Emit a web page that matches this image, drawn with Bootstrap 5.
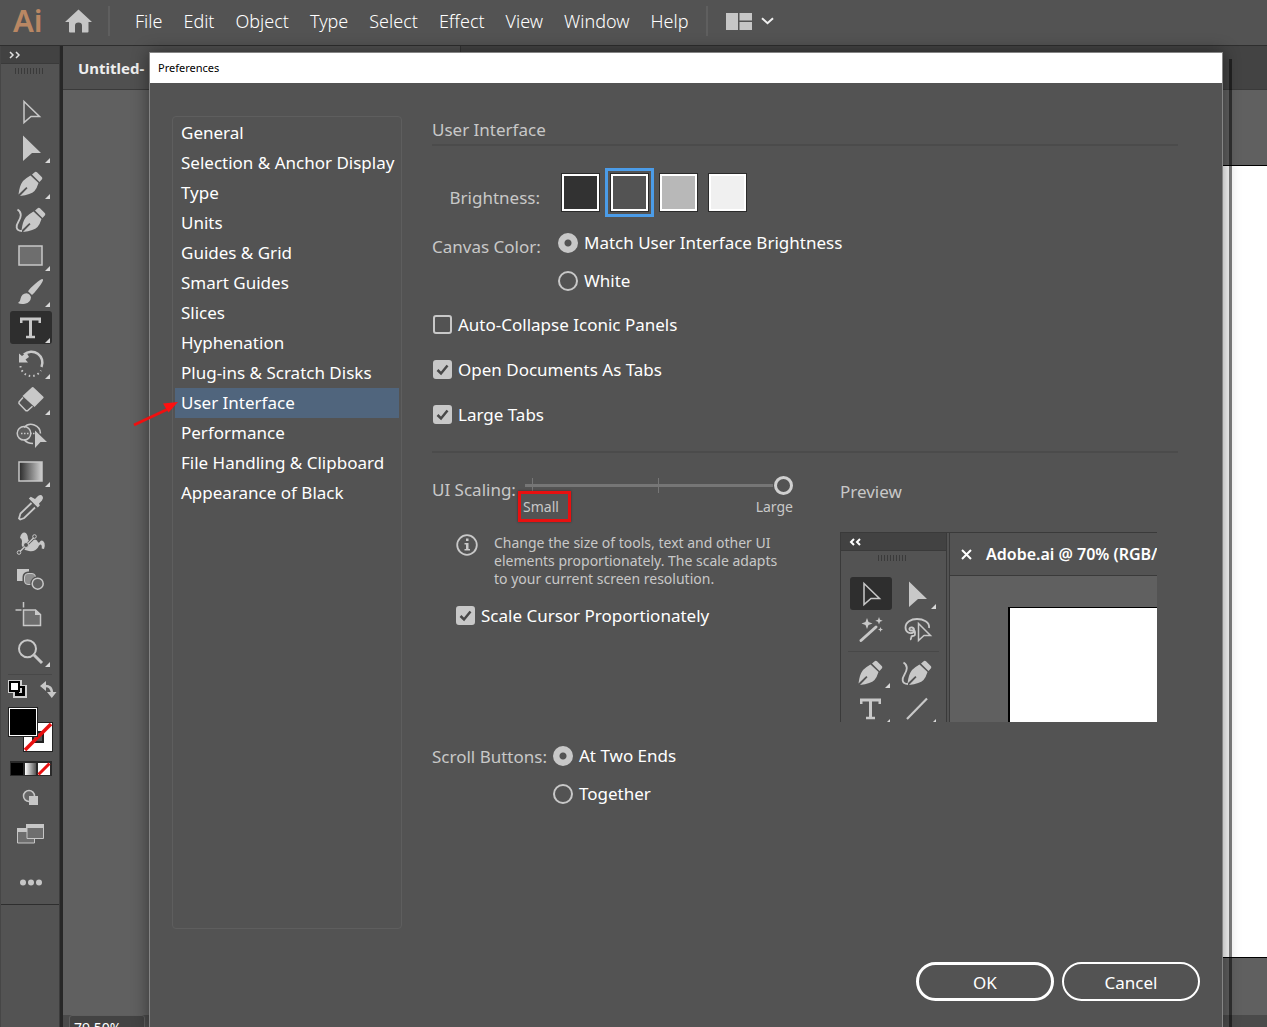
<!DOCTYPE html>
<html lang="en">
<head>
<meta charset="utf-8">
<meta name="viewport" content="width=device-width, initial-scale=1">
<title>Preferences</title>
<link href="https://cdn.jsdelivr.net/npm/bootstrap@5.3.0/dist/css/bootstrap.min.css" rel="stylesheet">
<style>
  :root { --ui: #535353; --ink: #c8c8c8; --edge: #3c3c3c; --canvas: #606060; }
  body { font-family: "Noto Sans", "Open Sans", sans-serif; font-size: 17px; line-height: 24px; color: #fff; background: var(--ui); height: 100vh; overflow: hidden; }
  svg { display: block; }
  button { color: inherit; }

  /* top menu bar */
  .app-bar { height: 46px; border-bottom: 1px solid #2e2e2e; padding-left: 13px; padding-bottom: 3px; }
  .app-logo { font-size: 31px; font-weight: 600; line-height: 38px; color: #b98763; width: 52px; padding-bottom: 2px; }
  .app-home { padding-top: 3px; }
  .app-sep { width: 2px; height: 30px; background: #5f5f5f; }
  .app-menu { gap: 21px; margin-left: 25px; margin-right: 18px; }
  .app-menu a { font-size: 18px; font-weight: 300; color: #fff; text-decoration: none; }
  .bare { background: none; border: 0; padding: 0; }

  /* tool strip */
  .tool-strip { width: 63px; border-left: 1px solid #464646; border-right: 3px solid #272727; }
  .tool-inner { border-right: 1px solid var(--edge); }
  .strip-head { height: 18px; background: #424242; border-bottom: 1px solid #3a3a3a; padding-left: 8px; }
  .grip { width: 29px; height: 6px; background: repeating-linear-gradient(90deg, #3a3a3a 0 1px, transparent 1px 3px); margin: 4px 0 16px 14px; }
  .tool { width: 44px; height: 36px; color: var(--ink); }
  .tool svg { overflow: visible; }
  .strip-rule { height: 1px; background: #484848; margin: 0 7px; }
  .strip-end { border-top: 1px solid #2e2e2e; }

  /* document */
  .doc-tabs { height: 44px; background: #434343; border-bottom: 1px solid #3a3a3a; }
  .doc-tab { width: 398px; background: #505050; border-right: 1px solid #333; padding-left: 15px; font-size: 15px; font-weight: 700; color: #eee; }
  .doc-canvas { background: var(--canvas); padding: 75px 0 57px 700px; }
  .artboard { background: #fff; border: solid #000; border-width: 1px 0; }
  .doc-status { height: 12px; background: #4a4a4a; padding-left: 6px; overflow: hidden; }
  .zoom-box { width: 76px; height: 30px; border: 1px solid #5e5e5e; border-radius: 3px; background: #434343; font-size: 14px; line-height: 24px; padding-left: 4px; }

  /* dialog window */
  .pref { position: absolute; left: 149px; right: 44px; top: 52px; bottom: 0; background: var(--ui); border: 1px solid #858585; border-bottom: 0; box-shadow: 0 0 16px rgba(0,0,0,.45); }
  .pref::after { content: ""; position: absolute; left: 100%; top: 6px; bottom: 0; width: 10px; border-right: 3px solid rgba(0,0,0,.5); }
  .pref-title { height: 30px; background: #fff; color: #000; font-size: 11px; line-height: 30px; padding-left: 8px; }
  .pref-body { padding: 33px 44px 0 22px; gap: 30px; }
  .pref-nav { width: 230px; border: 1px solid #5e5e5e; border-radius: 4px; padding: 1px 2px; }
  .pref-nav a { height: 30px; line-height: 30px; padding-left: 6px; color: #fff; text-decoration: none; white-space: nowrap; }
  .pref-nav a.current { background: #50657d; }
  .dim { color: var(--ink); }
  .pane-title { height: 30px; line-height: 28px; border-bottom: 2px solid #4b4b4b; font-size: 17px; font-weight: 400; margin: 0; }
  .pane-rule { height: 2px; background: #4b4b4b; margin-top: 14px; }
  .tag-a { width: 108px; line-height: 38px; text-align: right; margin-right: 18px; white-space: nowrap; direction: rtl; unicode-bidi: plaintext; }
  .tag-b { width: 121px; line-height: 40px; }
  .tag-c { width: 91px; line-height: 40px; white-space: nowrap; }

  .bright { margin-top: 22px; height: 49px; gap: 10px; padding-left: 3px; }
  .swatch { appearance: none; width: 39px; height: 39px; margin: 0; border: 1px solid #2b2b2b; box-shadow: inset 0 0 0 2px #fff; }
  .swatch:checked { outline: 3px solid #4b9ce8; outline-offset: 2px; }
  .sw-1 { background: #323232; } .sw-2 { background: #535353; } .sw-3 { background: #b8b8b8; } .sw-4 { background: #f0f0f0; }
  .canvas-row { padding-top: 7px; }
  .check-rows { padding-top: 2px; }

  .opt { gap: 6px; }
  .row-38 { height: 38px; }
  .row-45 { height: 45px; }
  .dot.form-check-input { width: 20px; height: 20px; margin: 0; background: none; border: 2px solid var(--ink); flex: none; }
  .dot.form-check-input:checked { background: radial-gradient(circle, var(--ui) 0 3px, var(--ink) 4px); background-origin: border-box; }
  .tick.form-check-input { width: 19px; height: 19px; margin: 0 0 0 1px; background: none; border: 2px solid var(--ink); border-radius: 3px; flex: none; }
  .tick.form-check-input:checked { background: var(--ink) url("data:image/svg+xml,%3Csvg xmlns='http://www.w3.org/2000/svg' viewBox='0 0 15 15'%3E%3Cpath d='M2.5 8l3.5 3.5L12.500 3.500' fill='none' stroke='%23484848' stroke-width='2.500'/%3E%3C/svg%3E") center / 15px no-repeat; }

  .scale-row { padding-top: 13px; }
  .scale-left { width: 408px; }
  .scale-box { width: 270px; padding-top: 5px; }
  .scale-ends { padding-top: 3px; }
  .scale-note { padding: 18px 0 5px 24px; }
  .scale-range { appearance: none; display: block; width: 268px; height: 20px; margin: 0 0 0 auto;
    background: linear-gradient(#767676,#767676) 7px 3px / 1px 15px no-repeat, linear-gradient(#767676,#767676) 133px 3px / 1px 15px no-repeat, linear-gradient(#767676,#767676) 0 9px / 248px 3px no-repeat; }
  .scale-range::-webkit-slider-thumb { appearance: none; width: 19px; height: 19px; border: 3px solid #d0d0d0; border-radius: 50%; background: var(--ui); }
  .fine { font-size: 14px; line-height: 18px; }
  .callout-box { position: absolute; inset: -7px -12px -6px -5px; border: 3px solid #e81010; box-shadow: 0 0 2px rgba(60,0,0,.6); }

  /* scaling preview */
  .mock-title { padding-top: 14px; }
  .mock { height: 190px; width: 317px; margin-top: 28px; overflow: hidden; border-left: 1px solid #3a3a3a; border-top: 1px solid #3a3a3a; }
  .mock-tools { width: 106px; border-right: 1px solid #3a3a3a; flex: none; }
  .mock-tools .grip { margin: 4px auto 15px 37px; }
  .mock-tools .strip-rule { margin: 3px 7px; }
  .mock-grid { padding-left: 8px; column-gap: 2px; }
  .mock-doc { margin-left: 2px; border-left: 1px solid #3a3a3a; background: var(--canvas); min-width: 0; }
  .mock-tab { height: 43px; background: var(--ui); border-bottom: 1px solid #3a3a3a; padding-left: 11px; gap: 14px; font-size: 16px; font-weight: 600; white-space: nowrap; }
  .mock-page { margin: 31px 0 0 58px; background: #fff; border: solid #000; border-width: 1px 0 0 2px; }

  .scroll-row { padding-top: 15px; }
  .pref-foot { padding: 33px 22px 26px; gap: 8px; }
  .pill { width: 138px; height: 39px; border-radius: 20px; border: 2px solid #fff; color: #fff; font-size: 17px; line-height: 24px; padding: 2px 0 0; }
  .pill-main { border-width: 3px; }
  .pill:hover { color: #fff; background: #606060; border-color: #fff; }
  .pointer { position: absolute; left: 130px; top: 396px; }
</style>
</head>
<body class="d-flex flex-column">

<svg width="0" height="0" class="position-absolute" aria-hidden="true">
  <defs>
    <linearGradient id="gr"><stop offset="0" stop-color="#2a2a2a"/><stop offset="1" stop-color="#d0d0d0"/></linearGradient>
    <linearGradient id="gw"><stop offset="0" stop-color="#fff"/><stop offset="1" stop-color="#555"/></linearGradient>
    <symbol id="plate" viewBox="0 0 44 36"><rect x="1" y="1" width="42" height="33" rx="3" fill="#2e2e2e"/></symbol>
    <symbol id="corner" viewBox="0 0 44 36"><path d="M41 28v5h-5z" fill="#d8d8d8"/></symbol>
    <symbol id="arrow-o" viewBox="0 0 44 36"><path d="M15 7.500v21l7-6h8.500z" fill="none" stroke="currentColor" stroke-width="1.500"/></symbol>
    <symbol id="arrow-f" viewBox="0 0 44 36"><path d="M14 5.500L32 23h-9l-9 8z" fill="currentColor"/></symbol>
    <symbol id="pen" viewBox="0 0 44 36"><path d="M26 6q1-.6 2 .2l5 5q.6 1 0 2L30.500 16 23 8.500zM21.500 9.500l8 7.500q-1.500 5-4 8-3.500 3.500-14.500 5l7.500-7.800-1.200-1.200L9.500 28.500q1-9 4.500-13.500 3-3 7.500-5.500z" fill="currentColor"/></symbol>
    <symbol id="curve" viewBox="0 0 44 36"><path d="M29 6q1-.6 2 .2l5 5q.6 1 0 2L33.500 16 26 8.500zM24.500 9.500l8 7.500q-1.500 5-4 8-3.500 3.500-14.500 5l7.500-7.800-1.200-1.200L12.500 28.500q1-9 4.500-13.500 3-3 7.500-5.500z" fill="currentColor"/><path d="M8.500 7.500c5 3 3.500 8 1 12s-3.500 9 3.500 9.500" fill="none" stroke="currentColor" stroke-width="1.800"/></symbol>
    <symbol id="rect" viewBox="0 0 44 36"><path d="M10 8h23v19H10z" fill="#6e6e6e" stroke="currentColor" stroke-width="1.500"/></symbol>
    <symbol id="brush" viewBox="0 0 44 36"><path d="M33.800 5.200q1.500 1-5 9.300-4 5-5.800 6.500l-4-3.800q2.500-3.500 7-7.200 6.500-5.500 7.800-4.800zM17.500 19.200q4 .8 4.500 4.300-.5 5-6 6.300-4.500.8-7-.8 2.500-1.500 2.600-4.500.9-4.700 5.900-5.300z" fill="currentColor"/></symbol>
    <symbol id="type" viewBox="0 0 44 36"><path d="M11 7.500h21v5.500h-2.500v-2.500h-6.500v15.300H26v2.500h-9v-2.500h3V10.500h-6.500v2.500H11z" fill="currentColor"/></symbol>
    <symbol id="rotate" viewBox="0 0 44 36"><path d="M15 8.500a11 11 0 0 1 17.500 12.500" fill="none" stroke="currentColor" stroke-width="2.500"/><path d="M10 7.500v9h9l-2.500-3 3.500-2.500-2.500-4.500-4.500 3.500z" fill="currentColor"/><path d="M11.500 20a11 11 0 0 0 20.500 4.500" fill="none" stroke="currentColor" stroke-width="2" stroke-dasharray="1.500 3"/></symbol>
    <symbol id="eraser" viewBox="0 0 44 36"><path d="M23 5.200q.7-.6 1.400 0l10 9.500q.6.700 0 1.400L25.500 25 13.500 14z" fill="currentColor"/><path d="M14 15.500l-4 4.500 0 1.500 7 7.300h1.500l5-4.500" fill="none" stroke="currentColor" stroke-width="1.500"/></symbol>
    <symbol id="shaper" viewBox="0 0 44 36"><circle cx="15" cy="15.300" r="6.800" fill="#5e5e5e" stroke="currentColor" stroke-width="1.500"/><path d="M15 9.500a9.500 9.500 0 0 1 16.500 6M15 21.500q3 4 9 4" fill="none" stroke="currentColor" stroke-width="1.500"/><path d="M12 15.500h14" stroke="currentColor" stroke-width="1.500" stroke-dasharray="1.500 1.500"/><path d="M26 12.500L38 24h-6.500L26 30z" fill="currentColor"/></symbol>
    <symbol id="gradient" viewBox="0 0 44 36"><path d="M10 8h23v19H10z" fill="url(#gr)" stroke="currentColor" stroke-width="1.500"/></symbol>
    <symbol id="dropper" viewBox="0 0 44 36"><path d="M22.500 13L11.500 23.500 10 28.500l1.200 1 4-1.500L26 17.500" fill="none" stroke="currentColor" stroke-width="1.800"/><path d="M26 9l3-3q3-2 4.500.2 1.500 2-.5 4.300l-3 3 .8 2-2 2-9-9 2-1.800z" fill="currentColor"/></symbol>
    <symbol id="puppet" viewBox="0 0 44 36"><path d="M11 12q1-5.500 4.500-5.500 3 .5 3.500 6 1 4 4 3 2-3.500 5-1 1.500 4 3.500.5 2-1.500 4 2 .8 3-.5 6l-2.300-.5q.5-4-1.500-4-1.500 1-2.200 3-3 4.500-9 3.500-9-1-7-10-.5-3-2-3z" fill="currentColor"/><path d="M10 26.500L25 11.500" stroke="#535353" stroke-width="3"/><path d="M10 26.500L25 11.500" stroke="currentColor" stroke-width="1.500"/><circle cx="10" cy="26.500" r="1.800" fill="#535353" stroke="currentColor"/><circle cx="17" cy="19" r="2.500" fill="#535353" stroke="currentColor"/><circle cx="25.500" cy="10.500" r="1.800" fill="#535353" stroke="currentColor"/></symbol>
    <symbol id="blend" viewBox="0 0 44 36"><path d="M8 7h12v12H8z" fill="currentColor"/><rect x="15.500" y="11.500" width="11" height="11" rx="3.500" fill="#8e8e8e" stroke="#535353" stroke-width="4"/><rect x="15.500" y="11.500" width="11" height="11" rx="3.500" fill="#8e8e8e" stroke="currentColor"/><circle cx="28.700" cy="21.700" r="5.500" fill="#535353" stroke="#535353" stroke-width="4"/><circle cx="28.700" cy="21.700" r="5.500" fill="#606060" stroke="currentColor" stroke-width="1.500"/></symbol>
    <symbol id="board" viewBox="0 0 44 36"><path d="M14.500 12h12l5 4.500v11h-17z" fill="#6e6e6e" stroke="currentColor" stroke-width="1.500"/><path d="M26 11.500l6 5.500h-6z" fill="currentColor"/><path d="M14.500 4v5.500M6.500 12h6" stroke="currentColor" stroke-width="1.500"/></symbol>
    <symbol id="lens" viewBox="0 0 44 36"><circle cx="18.500" cy="14.700" r="8.500" fill="none" stroke="currentColor" stroke-width="2"/><path d="M25 21l8 8" stroke="currentColor" stroke-width="3"/></symbol>
    <symbol id="wand" viewBox="0 0 44 36"><path d="M12 28.500L27 15" stroke="currentColor" stroke-width="3" stroke-linecap="round"/><path d="M18 6l1.500 4 4 1.500-4 1.500-1.500 4-1.500-4-4-1.500 4-1.500zM30 5l1 2.700 2.700 1-2.700 1-1 2.700-1-2.700-2.700-1 2.700-1zM31.500 15l.7 1.800 1.800.7-1.800.7-.7 1.800-.7-1.800-1.800-.7 1.800-.7z" fill="currentColor"/></symbol>
    <symbol id="lasso" viewBox="0 0 44 36"><path d="M34 16c1-6-6-9-12-9s-11.500 3-11.500 8.500c0 5 4 6 6.500 5.500s3-5 0-5.500-3.500 3-1 3 4-1 4 2 0 3.500-2.500 3.500 0 3-2.500 3.500" fill="none" stroke="currentColor" stroke-width="1.800"/><path d="M23.500 11.500v17l5.500-5h6.500z" fill="#535353" stroke="currentColor" stroke-width="1.500"/></symbol>
    <symbol id="line" viewBox="0 0 44 36"><path d="M12 28L32 7.500" stroke="currentColor" stroke-width="2.200"/></symbol>
  </defs>
</svg>

<header class="app-bar d-flex align-items-center flex-shrink-0">
  <span class="app-logo">Ai</span>
  <button class="bare app-home" aria-label="Home"><svg width="27" height="24" viewBox="0 0 27 24"><path d="M13.500.500L27 13h-3.500v9.500q0 1-1 1H17v-7q0-3-3.500-3t-3.500 3v7H5q-1 0-1-1V13H0z" fill="#c6c6c6"/></svg></button>
  <span class="app-sep ms-3"></span>
  <nav class="app-menu d-flex"><a href="#">File</a><a href="#">Edit</a><a href="#">Object</a><a href="#">Type</a><a href="#">Select</a><a href="#">Effect</a><a href="#">View</a><a href="#">Window</a><a href="#">Help</a></nav>
  <span class="app-sep"></span>
  <button class="bare d-flex align-items-center gap-2 ms-3" aria-label="Arrange documents">
    <svg width="29" height="17" viewBox="0 0 29 17"><path d="M2 0h12v17H2zM15.500 0H28v7.500H15.500zM15.500 9H28v8H15.500z" fill="#c6c6c6"/></svg>
    <svg width="13" height="8" viewBox="0 0 13 8"><path d="M1 1.200l5.500 5 5.500-5" fill="none" stroke="#f0f0f0" stroke-width="2"/></svg>
  </button>
</header>

<div class="d-flex flex-grow-1">
  <aside class="tool-strip flex-shrink-0 d-flex flex-column">
    <div class="tool-inner flex-grow-1">
      <div class="strip-head d-flex align-items-center"><svg width="12" height="8" viewBox="0 0 12 8"><path d="M1 1l3 3-3 3M7 1l3 3-3 3" fill="none" stroke="#e0e0e0" stroke-width="1.500"/></svg></div>
      <div class="grip"></div>
      <div class="d-flex flex-column ps-2 pt-1" id="tools"></div>
      <div class="strip-rule mt-1 mb-1"></div>
      <svg width="58" height="225" viewBox="1 679 58 225">
        <path d="M8 680h14v5h5v13H13v-5H8z" fill="#d0d0d0"/>
        <rect x="15" y="686" width="10" height="10" fill="#000"/><rect x="19" y="688" width="3" height="5" fill="#d0d0d0"/>
        <rect x="10" y="682" width="9" height="9" fill="#fff" stroke="#000" stroke-width="2"/>
        <path d="M44 686q8-1 8 8" fill="none" stroke="#c6c6c6" stroke-width="2.500"/><path d="M40 686l6-5v10zM47 692h9.500l-4.700 6z" fill="#c6c6c6"/>
        <rect x="23.500" y="722.500" width="29" height="29" fill="#fff" stroke="#222"/><rect x="33" y="732" width="10" height="10" fill="#535353" stroke="#222" stroke-width="2"/><path d="M25 750L51 724" stroke="#e81010" stroke-width="3.500"/>
        <rect x="8.500" y="707.500" width="29" height="29" fill="#000" stroke="#222"/><rect x="9.500" y="708.500" width="27" height="27" fill="#000" stroke="#fff"/>
        <path d="M10 761h42v15H10z" fill="#2a2a2a"/><path d="M11 763h12v12H11z" fill="#000"/><path d="M25 763h11v12H25z" fill="url(#gw)"/><path d="M38 763h12v12H38z" fill="#fff"/><path d="M38.500 774.500l11-11" stroke="#e81010" stroke-width="3"/>
        <circle cx="29" cy="796" r="5.500" fill="#666" stroke="#c6c6c6" stroke-width="1.500"/><path d="M29 796h9v9h-9z" fill="#c6c6c6"/>
        <path d="M17.500 829h17v14h-17z" fill="#6e6e6e" stroke="#c6c6c6"/><path d="M17 828h10v4H17z" fill="#c6c6c6"/><path d="M27 825h16.500v13.500H27z" fill="#6e6e6e" stroke="#c6c6c6"/><path d="M26 824h18v4H26z" fill="#c6c6c6"/>
        <g fill="#c6c6c6"><circle cx="23" cy="882.500" r="3"/><circle cx="31" cy="882.500" r="3"/><circle cx="39" cy="882.500" r="3"/></g>
      </svg>
      <div class="strip-end"></div>
    </div>
  </aside>

  <main class="flex-grow-1 d-flex flex-column">
    <div class="doc-tabs d-flex"><div class="doc-tab d-flex align-items-center">Untitled-</div></div>
    <div class="doc-canvas flex-grow-1 d-flex"><div class="artboard flex-grow-1"></div></div>
    <div class="doc-status"><div class="zoom-box">79.50%</div></div>
  </main>
</div>

<section class="pref d-flex flex-column" role="dialog" aria-label="Preferences">
  <div class="pref-title">Preferences</div>
  <div class="pref-body d-flex flex-grow-1">
    <nav class="pref-nav d-flex flex-column flex-shrink-0">
      <a href="#">General</a><a href="#">Selection &amp; Anchor Display</a><a href="#">Type</a><a href="#">Units</a><a href="#">Guides &amp; Grid</a><a href="#">Smart Guides</a><a href="#">Slices</a><a href="#">Hyphenation</a><a href="#">Plug-ins &amp; Scratch Disks</a><a href="#" class="current">User Interface</a><a href="#">Performance</a><a href="#">File Handling &amp; Clipboard</a><a href="#">Appearance of Black</a>
    </nav>
    <div class="flex-grow-1">
      <h2 class="pane-title dim">User Interface</h2>

      <div class="d-flex align-items-end">
        <span class="tag-a dim">Brightness:</span>
        <div class="bright d-flex align-items-center">
          <input type="radio" class="swatch sw-1" name="bright" aria-label="Dark">
          <input type="radio" class="swatch sw-2" name="bright" aria-label="Medium dark" checked>
          <input type="radio" class="swatch sw-3" name="bright" aria-label="Medium light">
          <input type="radio" class="swatch sw-4" name="bright" aria-label="Light">
        </div>
      </div>

      <div class="canvas-row d-flex">
        <span class="tag-a dim pt-1">Canvas Color:</span>
        <div>
          <div class="opt row-38 d-flex align-items-center"><input class="dot form-check-input" type="radio" name="canvas" id="c1" checked><label for="c1">Match User Interface Brightness</label></div>
          <div class="opt row-38 d-flex align-items-center"><input class="dot form-check-input" type="radio" name="canvas" id="c2"><label for="c2">White</label></div>
        </div>
      </div>

      <div class="check-rows">
        <div class="opt row-45 d-flex align-items-center"><input class="tick form-check-input" type="checkbox" id="k1"><label for="k1">Auto-Collapse Iconic Panels</label></div>
        <div class="opt row-45 d-flex align-items-center"><input class="tick form-check-input" type="checkbox" id="k2" checked><label for="k2">Open Documents As Tabs</label></div>
        <div class="opt row-45 d-flex align-items-center"><input class="tick form-check-input" type="checkbox" id="k3" checked><label for="k3">Large Tabs</label></div>
      </div>
      <div class="pane-rule"></div>

      <div class="scale-row d-flex">
        <div class="scale-left pt-1">
          <div class="d-flex">
            <label class="tag-c dim" for="scale">UI Scaling:</label>
            <div class="scale-box">
              <input type="range" class="scale-range" id="scale" min="0" max="2" value="2">
              <div class="fine dim scale-ends d-flex justify-content-between"><span class="position-relative">Small<span class="callout-box"></span></span><span>Large</span></div>
            </div>
          </div>
          <div class="scale-note d-flex dim">
            <svg class="flex-shrink-0" width="22" height="22" viewBox="0 0 22 22"><circle cx="11" cy="11" r="9.800" fill="none" stroke="#c8c8c8" stroke-width="1.800"/><path d="M10 4.500h2.500V7H10zM8.500 9h4v6H14v1.500H8.500V15H10v-4.500H8.500z" fill="#c8c8c8"/></svg>
            <p class="fine mb-0 ms-3">Change the size of tools, text and other UI<br>elements proportionately. The scale adapts<br>to your current screen resolution.</p>
          </div>
          <div class="opt row-45 d-flex align-items-center ps-4"><input class="tick form-check-input ms-0" type="checkbox" id="k4" checked><label for="k4">Scale Cursor Proportionately</label></div>
        </div>
        <div>
          <div class="mock-title dim">Preview</div>
          <div class="mock d-flex" role="img" aria-label="Interface preview">
            <div class="mock-tools">
              <div class="strip-head d-flex align-items-center"><svg width="12" height="8" viewBox="0 0 12 8"><path d="M5 1L2 4l3 3M11 1L8 4l3 3" fill="none" stroke="#fff" stroke-width="2"/></svg></div>
              <div class="grip"></div>
              <div class="mock-grid d-flex flex-wrap" id="mockA"></div>
              <div class="strip-rule"></div>
              <div class="mock-grid d-flex flex-wrap" id="mockB"></div>
            </div>
            <div class="mock-doc flex-grow-1 d-flex flex-column">
              <div class="mock-tab d-flex align-items-center flex-shrink-0"><svg class="flex-shrink-0" width="11" height="11" viewBox="0 0 11 11"><path d="M1 1l9 9M10 1l-9 9" stroke="#fff" stroke-width="2"/></svg><span>Adobe.ai @ 70% (RGB/</span></div>
              <div class="mock-page flex-grow-1"></div>
            </div>
          </div>
        </div>
      </div>

      <div class="scroll-row d-flex">
        <span class="tag-b dim">Scroll Buttons:</span>
        <div>
          <div class="opt row-38 d-flex align-items-center"><input class="dot form-check-input" type="radio" name="scroll" id="s1" checked><label for="s1">At Two Ends</label></div>
          <div class="opt row-38 d-flex align-items-center"><input class="dot form-check-input" type="radio" name="scroll" id="s2"><label for="s2">Together</label></div>
        </div>
      </div>
    </div>
  </div>
  <div class="pref-foot d-flex justify-content-end">
    <button class="btn pill pill-main">OK</button><button class="btn pill">Cancel</button>
  </div>
</section>

<svg class="pointer" width="50" height="32" viewBox="130 396 50 32" aria-hidden="true"><path d="M134 425l33-15.500" stroke="#f01010" stroke-width="2.800"/><path d="M178 402l-9.500 10.500-5.500-9z" fill="#ff1010"/></svg>

<script src="https://cdn.jsdelivr.net/npm/bootstrap@5.3.0/dist/js/bootstrap.bundle.min.js"></script>
<script>
  // name, has flyout corner, selected
  const strip = [['arrow-o'],['arrow-f',1],['pen',1],['curve'],['rect',1],['brush',1],['type',1,1],['rotate',1],['eraser',1],['shaper'],['gradient',1],['dropper'],['puppet'],['blend'],['board'],['lens',1]];
  const icon = ([n, c, on]) => `<svg width="44" height="36">${on ? '<use href="#plate"/>' : ''}<use href="#${n}"/>${c ? '<use href="#corner"/>' : ''}</svg>`;
  document.getElementById('tools').innerHTML = strip.map(t => `<button class="bare tool" aria-label="${t[0]}">${icon(t)}</button>`).join('');
  const cells = list => list.map(t => `<span class="tool">${icon(t)}</span>`).join('');
  document.getElementById('mockA').innerHTML = cells([['arrow-o', 0, 1], ['arrow-f', 1], ['wand'], ['lasso']]);
  document.getElementById('mockB').innerHTML = cells([['pen', 1], ['curve'], ['type', 1], ['line', 1]]);
</script>
</body>
</html>
